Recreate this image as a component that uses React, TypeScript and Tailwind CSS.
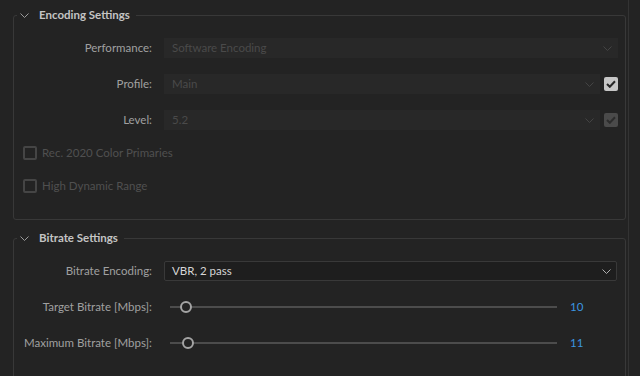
import React from "react";

const font = { fontFamily: "Lato, 'Open Sans', sans-serif" };

const Chevron = ({ className = "" }: { className?: string }) => (
  <svg width="9" height="5" viewBox="0 0 9 5" className={className}>
    <path d="M0.5 0.5 L4.5 4.5 L8.5 0.5" fill="none" stroke="currentColor" strokeWidth="1" />
  </svg>
);

const Check = () => (
  <svg width="10" height="8" viewBox="0 0 10 8">
    <path d="M1 4 L3.8 6.8 L9 1.2" fill="none" stroke="currentColor" strokeWidth="2" />
  </svg>
);

function Panel({ title, children, className = "" }: { title: string; children: React.ReactNode; className?: string }) {
  return (
    <fieldset className={`border border-[#383838] rounded-[3px] ${className}`}>
      <legend className="ml-[3px] pl-[3px] pr-[6px] h-[16px] flex items-center gap-[10px]">
        <Chevron className="text-[#9a9a9a]" />
        <span className="text-[11.5px] font-bold text-[#c4c4c4]">{title}</span>
      </legend>
      {children}
    </fieldset>
  );
}

function Row({ label, children, className = "" }: { label: string; children: React.ReactNode; className?: string }) {
  return (
    <div className={`grid grid-cols-[138px_1fr] gap-[12px] h-[20px] items-center ${className}`}>
      <span className="text-right text-[11.5px] text-[#a0a0a0] whitespace-nowrap">{label}</span>
      {children}
    </div>
  );
}

function DisabledSelect({ value, box }: { value: string; box?: "on" | "dim" }) {
  return (
    <div className="flex items-center gap-[4px] h-[20px]">
      <div className="flex-1 h-[20px] bg-[#282828] flex items-center justify-between pl-[8px] pr-[6px]">
        <span className="text-[11.5px] text-[#4a4a4a]">{value}</span>
        <Chevron className="text-[#444444]" />
      </div>
      {box === "on" && (
        <div className="w-[14px] h-[14px] rounded-[2px] bg-[#c6c6c6] text-[#262626] flex items-center justify-center">
          <Check />
        </div>
      )}
      {box === "dim" && (
        <div className="w-[14px] h-[14px] rounded-[2px] bg-[#4a4a4a] text-[#2c2c2c] flex items-center justify-center">
          <Check />
        </div>
      )}
    </div>
  );
}

function CheckRow({ label }: { label: string }) {
  return (
    <div className="h-[20px] flex items-center gap-[5px] pl-[9px] mt-[13px]">
      <div className="w-[14px] h-[14px] rounded-[2px] border-2 border-[#454545]" />
      <span className="text-[11.5px] text-[#505050]">{label}</span>
    </div>
  );
}

function Slider({ value, max = 240 }: { value: number; max?: number }) {
  const pct = (value / max) * 100;
  return (
    <div className="flex items-center pl-[6px]">
      <div className="relative w-[387px] h-[2px] bg-[#4c4c4c]">
        <div
          className="absolute top-1/2 w-[12px] h-[12px] -ml-[6px] -mt-[6px] rounded-full border-2 border-[#a4a4a4] bg-[#232323]"
          style={{ left: `${pct}%` }}
        />
      </div>
      <span className="ml-[13px] text-[11.5px] text-[#3b95e0]">{value}</span>
    </div>
  );
}

export default function App() {
  return (
    <div className="w-[640px] h-[376px] overflow-hidden bg-[#232323]" style={font}>
      <div className="w-[629px] h-full border-r border-[#333333] pl-[13px] pr-[2px] pt-[7px]">
        <Panel title="Encoding Settings" className="pt-[15px] pb-[23px] pr-[7px]">
          <div className="flex flex-col gap-[16px]">
            <Row label="Performance:">
              <DisabledSelect value="Software Encoding" />
            </Row>
            <Row label="Profile:">
              <DisabledSelect value="Main" box="on" />
            </Row>
            <Row label="Level:">
              <DisabledSelect value="5.2" box="dim" />
            </Row>
          </div>
          <CheckRow label="Rec. 2020 Color Primaries" />
          <CheckRow label="High Dynamic Range" />
        </Panel>

        <Panel title="Bitrate Settings" className="mt-[10px] pt-[15px] pb-[30px] pr-[8px]">
          <div className="flex flex-col gap-[16px]">
            <Row label="Bitrate Encoding:">
              <div className="h-[20px] bg-[#1e1e1e] border border-[#393939] rounded-[2px] flex items-center justify-between pl-[7px] pr-[5px]">
                <span className="text-[11.5px] text-[#d6d6d6]">VBR, 2 pass</span>
                <Chevron className="text-[#b0b0b0]" />
              </div>
            </Row>
            <Row label="Target Bitrate [Mbps]:">
              <Slider value={10} />
            </Row>
            <Row label="Maximum Bitrate [Mbps]:">
              <Slider value={11} />
            </Row>
          </div>
        </Panel>
      </div>
    </div>
  );
}
